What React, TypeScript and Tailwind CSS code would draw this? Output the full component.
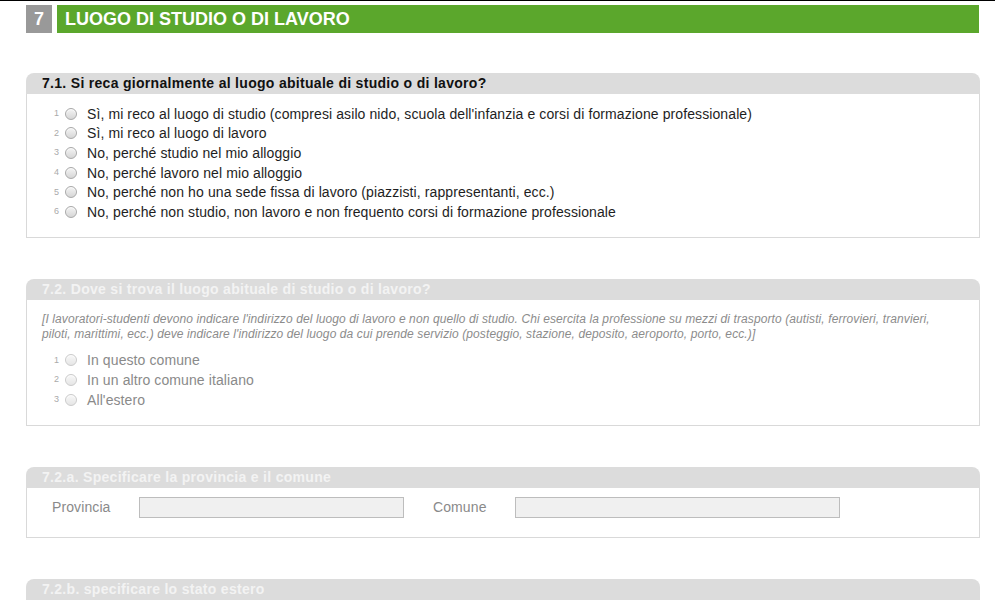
import type { ReactNode } from 'react'

const font = { fontFamily: '"Liberation Sans", Arial, sans-serif' }

const Radio = () => (
  <span className="inline-block w-[12px] h-[12px] rounded-full border border-[#a9a9a9] bg-gradient-to-b from-[#f4f4f4] to-[#d6d6d6] shadow-[inset_0_1px_1px_rgba(255,255,255,0.8)]" />
)

interface OptionProps {
  n: number
  label: string
  disabled?: boolean
}

const Option = ({ n, label, disabled }: OptionProps) => (
  <div className="flex items-center h-[19.6px]">
    <span className="w-[8px] text-[9px] text-right text-[#aaa] leading-none">{n}</span>
    <span className={`ml-[6px] flex ${disabled ? 'opacity-60' : ''}`}>
      <Radio />
    </span>
    <span
      className={`ml-[10px] text-[14px] leading-none tracking-[0.1px] ${
        disabled ? 'text-[#8a8a8a]' : 'text-[#1e1e1e]'
      }`}
    >
      {label}
    </span>
  </div>
)

interface SectionProps {
  title: string
  disabled?: boolean
  first?: boolean
  children?: ReactNode
}

const Section = ({ title, disabled, first, children }: SectionProps) => (
  <div className={first ? 'mt-[40px]' : 'mt-[41px]'}>
    <div
      className={`h-[21px] rounded-t-[8px] bg-[#dcdcdc] px-[16px] flex items-center text-[14px] tracking-[0.3px] font-bold ${
        disabled ? 'text-[#f3f3f3]' : 'text-[#111]'
      }`}
    >
      {title}
    </div>
    {children && <div className="border border-t-0 border-[#d9d9d9] bg-white">{children}</div>}
  </div>
)

const options71 = [
  "Sì, mi reco al luogo di studio (compresi asilo nido, scuola dell'infanzia e corsi di formazione professionale)",
  'Sì, mi reco al luogo di lavoro',
  'No, perché studio nel mio alloggio',
  'No, perché lavoro nel mio alloggio',
  'No, perché non ho una sede fissa di lavoro (piazzisti, rappresentanti, ecc.)',
  'No, perché non studio, non lavoro e non frequento corsi di formazione professionale',
]

const options72 = ['In questo comune', 'In un altro comune italiano', "All'estero"]

export default function App() {
  return (
    <div className="w-[995px] h-[600px] overflow-hidden bg-white border-t border-black" style={font}>
      <div className="ml-[26px] w-[954px]">
        {/* Title bar */}
        <div className="mt-[4px] flex gap-[5px] h-[28px] pr-[1px]">
          <div className="w-[26px] bg-[#999999] text-white font-bold text-[18px] flex items-center justify-center">
            7
          </div>
          <div className="flex-1 bg-[#5ba72c] text-white font-bold text-[18px] flex items-center pl-[8px]">
            LUOGO DI STUDIO O DI LAVORO
          </div>
        </div>

        <Section first title="7.1. Si reca giornalmente al luogo abituale di studio o di lavoro?">
          <div className="pt-[10px] pb-[15px] pl-[24px]">
            {options71.map((o, i) => (
              <Option key={i} n={i + 1} label={o} />
            ))}
          </div>
        </Section>

        <Section title="7.2. Dove si trova il luogo abituale di studio o di lavoro?" disabled>
          <div className="pt-[12px] pb-[16px]">
            <p className="px-[15px] text-[12px] italic leading-[15px] tracking-[0.1px] text-[#8c8c8c]">
              [I lavoratori-studenti devono indicare l'indirizzo del luogo di lavoro e non quello di studio. Chi esercita la
              professione su mezzi di trasporto (autisti, ferrovieri, tranvieri,
              <br />
              piloti, marittimi, ecc.) deve indicare l'indirizzo del luogo da cui prende servizio (posteggio, stazione,
              deposito, aeroporto, porto, ecc.)]
            </p>
            <div className="mt-[9px] pl-[24px]">
              {options72.map((o, i) => (
                <Option key={i} n={i + 1} label={o} disabled />
              ))}
            </div>
          </div>
        </Section>

        <Section title="7.2.a. Specificare la provincia e il comune" disabled>
          <div className="pt-[9px] pb-[19px] pl-[25px] flex items-center text-[14px] tracking-[0.1px] text-[#8a8a8a]">
            <span className="w-[87px]">Provincia</span>
            <div className="w-[265px] h-[21px] bg-[#f0f0f0] border border-[#bdbdbd]" />
            <span className="ml-[29px] w-[82px]">Comune</span>
            <div className="w-[325px] h-[21px] bg-[#f0f0f0] border border-[#bdbdbd]" />
          </div>
        </Section>

        <Section title="7.2.b. specificare lo stato estero" disabled>
          <div className="h-[40px]" />
        </Section>
      </div>
    </div>
  )
}
